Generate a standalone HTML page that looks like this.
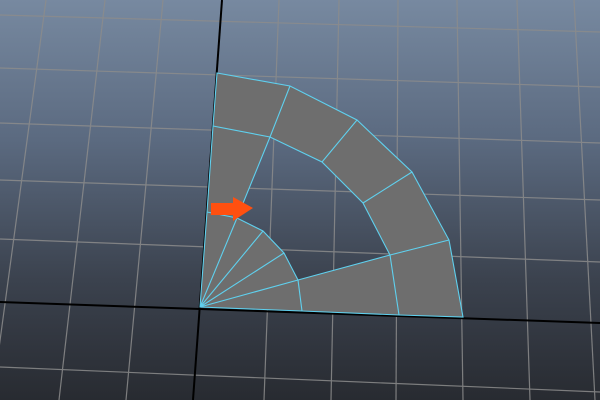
<!DOCTYPE html>
<html><head><meta charset="utf-8"><style>
html,body{margin:0;padding:0;width:600px;height:400px;overflow:hidden}
</style></head><body>
<svg width="600" height="400" viewBox="0 0 600 400" xmlns="http://www.w3.org/2000/svg">
<defs>
<linearGradient id="bg" x1="0" y1="0" x2="0" y2="1">
<stop offset="0" stop-color="#7789a0"/>
<stop offset="0.35" stop-color="#5b6a80"/>
<stop offset="0.7" stop-color="#3b424e"/>
<stop offset="1" stop-color="#282b31"/>
</linearGradient>
</defs>
<rect width="600" height="400" fill="url(#bg)"/>
<g stroke="#8c8c8c" stroke-width="1.2" opacity="0.85">
<line x1="-12" y1="0" x2="-77" y2="400"/>
<line x1="46" y1="0" x2="-8" y2="400"/>
<line x1="105" y1="0" x2="59" y2="400"/>
<line x1="163" y1="0" x2="126" y2="400"/>
<line x1="279" y1="0" x2="264" y2="400"/>
<line x1="339" y1="0" x2="331" y2="400"/>
<line x1="398" y1="0" x2="396" y2="400"/>
<line x1="457" y1="0" x2="463" y2="400"/>
<line x1="517" y1="0" x2="530" y2="400"/>
<line x1="574" y1="0" x2="595" y2="400"/>
<line x1="0" y1="15" x2="600" y2="32"/>
<line x1="0" y1="68" x2="600" y2="87"/>
<line x1="0" y1="123" x2="600" y2="143"/>
<line x1="0" y1="180" x2="600" y2="200"/>
<line x1="0" y1="239" x2="600" y2="262"/>
<line x1="0" y1="367" x2="600" y2="392"/>
</g>
<g stroke="#000" stroke-width="2">
<line x1="222" y1="0" x2="193" y2="400"/>
<line x1="0" y1="302" x2="600" y2="323"/>
</g>
<path fill="#6e6e6e" fill-rule="evenodd" d="M200,307 L207,212 L213,126 L217,73 L290,86 L357,120 L412,172 L449,240 L463,317 L399,315 L302,311 Z M270,137 L322,162 L363,203 L390,255 L298,280 L284,253 L263,231 L237,218 Z"/>
<g stroke="#5fd0ee" stroke-width="1.1" fill="none">
<path d="M200,307 L207,212 L213,126 L217,73 L290,86 L357,120 L412,172 L449,240 L463,317 L399,315 L302,311 Z"/>
<path d="M213,126 L270,137 L322,162 L363,203 L390,255 L399,315"/>
<path d="M207,212 L237,218 L263,231 L284,253 L298,280 L302,311"/>
<path d="M290,86 L270,137 M357,120 L322,162 M412,172 L363,203 M449,240 L390,255"/>
<path d="M270,137 L237,218 M298,280 L390,255"/>
<path d="M200,307 L237,218 M200,307 L263,231 M200,307 L284,253 M200,307 L298,280"/>
</g>
<path fill="#ff5010" d="M211,203 L233,203 L233,197 L253,208 L233,221 L233,215 L211,215 Z"/>
</svg>
</body></html>
